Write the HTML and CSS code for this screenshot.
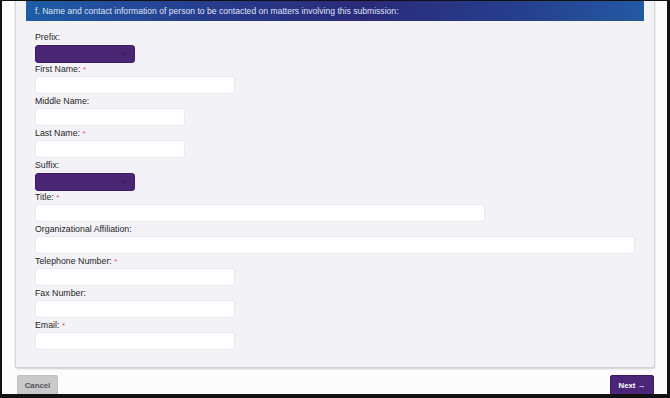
FILE: index.html
```html
<!DOCTYPE html>
<html lang="en">

<head>
  <meta charset="UTF-8">
  <meta name="viewport" content="width=device-width, initial-scale=1.0">
  <title>Contact Information</title>

  <link rel="stylesheet" href="styles.css">
</head>

<body>
  <div class="frame">
    <div class="card">
      <div class="section-head">f. Name and contact information of person to be contacted on matters involving this submission:</div>

      <div class="fields">
        <div class="field">
          <label for="prefix">Prefix:</label>
          <div class="select-wrap"><select id="prefix"><option></option></select></div>
        </div>
        <div class="field">
          <label for="first">First Name: <span class="req">*</span></label>
          <input id="first" type="text" class="w-200">
        </div>
        <div class="field">
          <label for="middle">Middle Name:</label>
          <input id="middle" type="text" class="w-150">
        </div>
        <div class="field">
          <label for="last">Last Name: <span class="req">*</span></label>
          <input id="last" type="text" class="w-150">
        </div>
        <div class="field">
          <label for="suffix">Suffix:</label>
          <div class="select-wrap"><select id="suffix"><option></option></select></div>
        </div>
        <div class="field">
          <label for="title">Title: <span class="req">*</span></label>
          <input id="title" type="text" class="w-450">
        </div>
        <div class="field">
          <label for="org">Organizational Affiliation:</label>
          <input id="org" type="text" class="w-full">
        </div>
        <div class="field">
          <label for="phone">Telephone Number: <span class="req">*</span></label>
          <input id="phone" type="text" class="w-200">
        </div>
        <div class="field">
          <label for="fax">Fax Number:</label>
          <input id="fax" type="text" class="w-200">
        </div>
        <div class="field">
          <label for="email">Email: <span class="req">*</span></label>
          <input id="email" type="text" class="w-200">
        </div>
      </div>
    </div>

    <div class="actions">
      <button type="button" class="btn btn-cancel">Cancel</button>
      <button type="button" class="btn btn-next">Next &rarr;</button>
    </div>
  </div>
</body>

</html>
```

FILE: styles.css
```css
html,
body {
  margin: 0;
  padding: 0;
  background-color: #ffffff;
}

body {
  font-family: "Liberation Sans", Arial, sans-serif;
  color: #222222;
}

.frame {
  box-sizing: border-box;
  height: 398px;
  overflow: hidden;
  background-color: #fcfcfc;
  border-style: solid;
  border-color: #111111;
  border-width: 1px 3px 4px 2px;
}

.card {
  margin: 0 12px 0 13px;
  background-color: #f3f2f7;
  border: 1px solid #d3d3d8;
  border-top: none;
  border-radius: 0 0 3px 3px;
  box-shadow: 0 1px 2px rgba(0, 0, 0, 0.18);
}

.section-head {
  height: 20px;
  line-height: 20px;
  margin: 0 10px;
  padding-left: 9px;
  font-size: 8.6px;
  color: #dfe1f2;
  background: linear-gradient(90deg, #1e5da6 0%, #283b8d 30%, #2b2a7a 55%, #253f8e 80%, #2459a2 100%);
  white-space: nowrap;
}

.fields {
  display: flex;
  flex-direction: column;
  gap: 1px;
  padding: 10px 19px 17px 19px;
}

.field {
  display: flex;
  flex-direction: column;
  align-items: flex-start;
}

label {
  display: block;
  height: 12px;
  line-height: 12px;
  margin-bottom: 1px;
  font-size: 8.8px;
  color: #262626;
}

.req {
  color: #d9534f;
  font-size: 8px;
}

input {
  box-sizing: border-box;
  height: 18px;
  margin: 0;
  padding: 0 6px;
  border: 1px solid #e9e8ee;
  border-radius: 3px;
  background-color: #ffffff;
}

.w-150 { width: 150px; }
.w-200 { width: 200px; }
.w-450 { width: 450px; }
.w-full { width: 100%; }

.select-wrap {
  position: relative;
  width: 100px;
  height: 18px;
}

.select-wrap::after {
  content: "";
  position: absolute;
  right: 9px;
  top: 7px;
  width: 3px;
  height: 3px;
  border-right: 1px solid #2b1645;
  border-bottom: 1px solid #2b1645;
  transform: rotate(45deg);
  opacity: 0.5;
}

select {
  appearance: none;
  -webkit-appearance: none;
  box-sizing: border-box;
  width: 100%;
  height: 18px;
  margin: 0;
  border: 1px solid #3d1c63;
  border-radius: 3px;
  background-color: #4a2574;
}

.actions {
  display: flex;
  justify-content: space-between;
  margin: 7px 13px 0 15px;
}

.btn {
  height: 20px;
  padding: 0;
  border-radius: 2px;
  font-family: "Liberation Sans", Arial, sans-serif;
  font-size: 7.8px;
  font-weight: bold;
}

.btn-cancel {
  width: 41px;
  color: #555555;
  background-color: #c9c9cb;
  border: 1px solid #bdbdc0;
}

.btn-next {
  width: 44px;
  color: #ffffff;
  background-color: #4b2577;
  border: 1px solid #3a1a60;
}
```
